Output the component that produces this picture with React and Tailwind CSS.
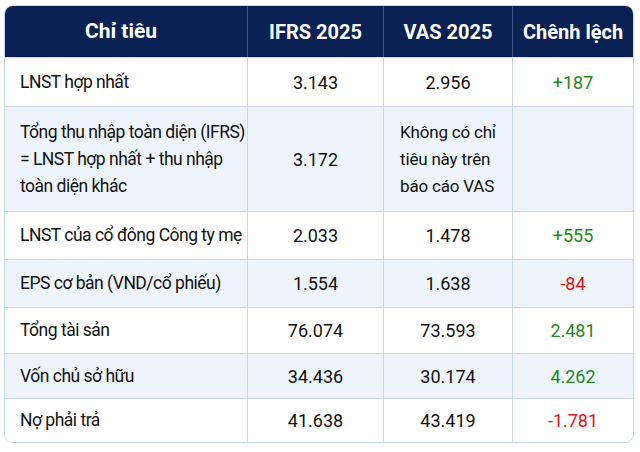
import React from 'react';

const rows = [
    { label: 'LNST hợp nhất', ifrs: '3.143', vas: '2.956', diff: '+187', tone: 'up', h: 'h-[49px]' },
    {
        label: (
            <>
                Tổng thu nhập toàn diện (IFRS)
                <br />= LNST hợp nhất + thu nhập
                <br />toàn diện khác
            </>
        ),
        ifrs: '3.172',
        vas: (
            <span className="inline-block text-left text-[17px] tracking-[-0.2px]">
                Không có chỉ
                <br />tiêu này trên
                <br />báo cáo VAS
            </span>
        ),
        diff: '',
        h: 'h-[105px]',
        tall: true,
    },
    { label: 'LNST của cổ đông Công ty mẹ', ifrs: '2.033', vas: '1.478', diff: '+555', tone: 'up', h: 'h-[48px]' },
    { label: 'EPS cơ bản (VND/cổ phiếu)', ifrs: '1.554', vas: '1.638', diff: '-84', tone: 'down', h: 'h-[48px]' },
    { label: 'Tổng tài sản', ifrs: '76.074', vas: '73.593', diff: '2.481', tone: 'up', h: 'h-[46px]' },
    { label: 'Vốn chủ sở hữu', ifrs: '34.436', vas: '30.174', diff: '4.262', tone: 'up', h: 'h-[45px]' },
    { label: 'Nợ phải trả', ifrs: '41.638', vas: '43.419', diff: '-1.781', tone: 'down', h: 'h-[44px]' },
];

export default function App() {
    return (
        <div className="w-[640px] h-[452px] bg-white p-[4px] pt-[5px] font-['Roboto','Liberation_Sans',sans-serif] text-[#111111]">
            <div className="w-[630px] rounded-[9px] border border-[#c8d8ee] overflow-hidden">
                {/* header */}
                <div className="grid grid-cols-[242px_136px_129px_121px] h-[51px] bg-[#0b2154] text-white text-[20px] font-bold">
                    <div className="flex items-center justify-center pr-[10px] text-[21px]">Chỉ tiêu</div>
                    <div className="flex items-center justify-center border-l border-[#3a4f7e]">IFRS 2025</div>
                    <div className="flex items-center justify-center border-l border-[#3a4f7e]">VAS 2025</div>
                    <div className="flex items-center justify-center border-l border-[#3a4f7e]">Chênh lệch</div>
                </div>

                {rows.map((r, i) => (
                    <div
                        key={i}
                        className={`grid grid-cols-[242px_136px_129px_121px] ${r.h} border-t border-[#c8d8ee] text-[18px] ${i % 2 === 1 ? 'bg-[#eef4fb]' : 'bg-white'}`}
                    >
                        <div className={`flex items-center pl-[15px] whitespace-nowrap text-[17.5px] tracking-[-0.5px] ${r.tall ? 'leading-[27px]' : ''}`}>
                            <span>{r.label}</span>
                        </div>
                        <div className="flex items-center justify-center border-l border-[#c8d8ee]">{r.ifrs}</div>
                        <div className={`flex items-center justify-center border-l border-[#c8d8ee] ${r.tall ? 'leading-[27px]' : ''}`}>{r.vas}</div>
                        <div
                            className={`flex items-center justify-center border-l border-[#c8d8ee] ${r.tone === 'up' ? 'text-[#1c8a1c]' : 'text-[#e01414]'}`}
                        >
                            {r.diff}
                        </div>
                    </div>
                ))}
            </div>
        </div>
    );
}
